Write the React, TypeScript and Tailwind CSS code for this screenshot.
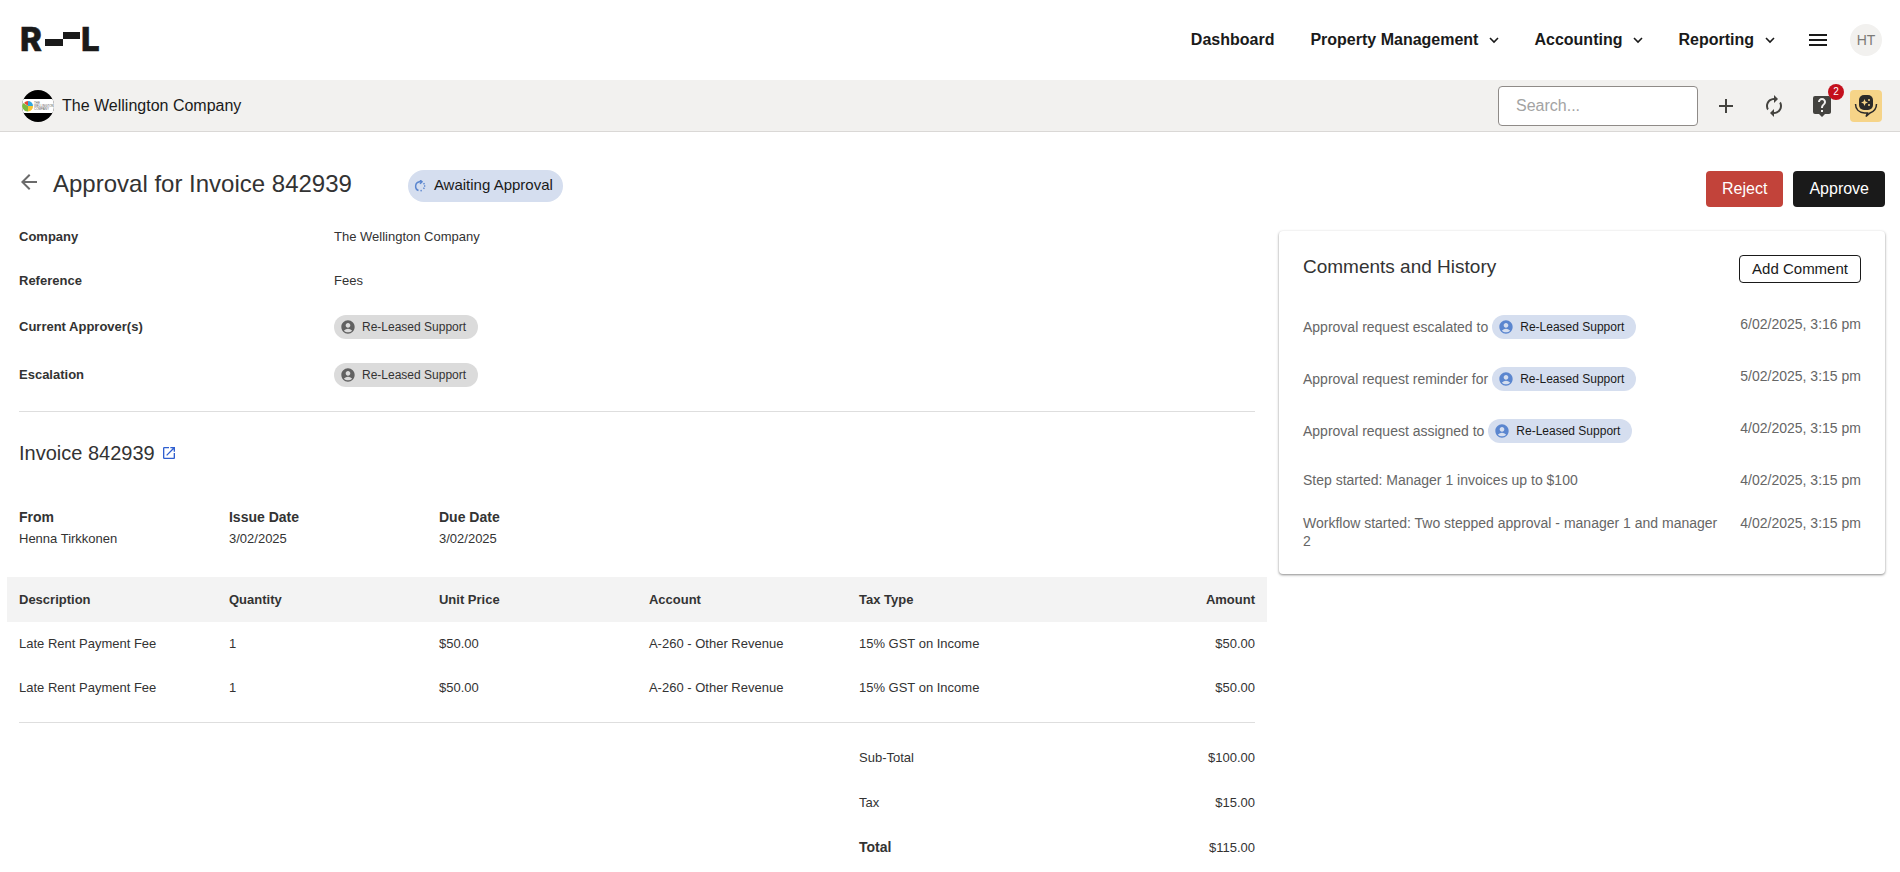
import type { ReactNode } from 'react';
import {
  MdAccountCircle,
  MdAdd,
  MdArrowBack,
  MdAutorenew,
  MdLiveHelp,
  MdMenu,
  MdOpenInNew,
} from 'react-icons/md';

const navItems = [
  { label: 'Property Management' },
  { label: 'Accounting' },
  { label: 'Reporting' },
];

const lines = [
  { description: 'Late Rent Payment Fee', quantity: 1, price: '$50.00', account: 'A-260 - Other Revenue', tax: '15% GST on Income', amount: '$50.00' },
  { description: 'Late Rent Payment Fee', quantity: 1, price: '$50.00', account: 'A-260 - Other Revenue', tax: '15% GST on Income', amount: '$50.00' },
];

const history = [
  { text: 'Approval request escalated to', user: 'Re-Leased Support', date: '6/02/2025, 3:16 pm' },
  { text: 'Approval request reminder for', user: 'Re-Leased Support', date: '5/02/2025, 3:15 pm' },
  { text: 'Approval request assigned to', user: 'Re-Leased Support', date: '4/02/2025, 3:15 pm' },
  { text: 'Step started: Manager 1 invoices up to $100', date: '4/02/2025, 3:15 pm' },
  { text: 'Workflow started: Two stepped approval - manager 1 and manager 2', date: '4/02/2025, 3:15 pm' },
];

function Logo() {
  return (
    <svg width="80" height="26" viewBox="0 0 80 26" fill="#1a1a1a" className="block overflow-visible" aria-label="Re-Leased">
      <g fontSize="33" fontWeight="800" fontFamily="Inter, sans-serif" stroke="#1a1a1a" strokeWidth="0.600">
        <text x="-2" y="24">R</text>
        <text x="59" y="24">L</text>
      </g>
      <rect x="23" y="12" width="18" height="7" />
      <rect x="41" y="5" width="17" height="7" />
    </svg>
  );
}

function CompanyAvatar() {
  return (
    <svg width="32" height="32" viewBox="0 0 32 32" aria-hidden="true">
      <clipPath id="avatar">
        <circle cx="16" cy="16" r="16" />
      </clipPath>
      <g clipPath="url(#avatar)">
        <rect width="32" height="32" fill="#000" />
        <rect y="9" width="32" height="14" fill="#fff" />
        <path d="M6 16V11A5 5 0 0 0 2 13Z" fill="#e5493a" />
        <path d="M6 16V11A5 5 0 0 1 11 16Z" fill="#2ea7df" />
        <path d="M6 16H11A5 5 0 0 1 6 21.500Z" fill="#f6c430" />
        <path d="M6 16V21.500A5.500 5.500 0 0 1 1 13Z" fill="#7cb93e" />
        <g fill="#555" fontSize="3" fontFamily="Liberation Sans, sans-serif">
          <text x="12" y="14">THE</text>
          <text x="12" y="17">WELLINGTON</text>
          <text x="12" y="20">COMPANY</text>
        </g>
      </g>
    </svg>
  );
}

function AssistantIcon() {
  return (
    <svg width="24" height="24" viewBox="0 0 24 24" fill="none" aria-hidden="true">
      <rect x="5" y="1" width="14" height="15" rx="5" fill="#2b2a29" />
      <path d="M10.500 5l1 2.500 2.500 1-2.500 1-1 2.500-1-2.500-2.500-1 2.500-1z" fill="#f6d488" />
      <circle cx="15" cy="6" r="1" fill="#f6d488" />
      <circle cx="15" cy="11" r="1" fill="#f6d488" />
      <path d="M1.500 10c0 5 3.500 8.500 9 9h3l-1.500 3.500 4-3.500c4-1.500 6.500-4.500 6.500-9" stroke="#2b2a29" strokeWidth="1.500" />
    </svg>
  );
}

function PendingIcon() {
  return (
    <svg width="12" height="12" viewBox="0 0 12 12" fill="none" stroke="#5b86cf" strokeWidth="1.500" aria-hidden="true">
      <path d="M4.500 10.500A4.600 4.600 0 0 1 5.500 1.700H7.500" />
      <path d="M6 0l2 1.700-2 2" />
      <path d="M9.500 3.300l1 1M10 6h1.300M9.500 8.700l.8-1M6.500 10.800l1.300-.3" />
    </svg>
  );
}

function Chevron() {
  return (
    <svg width="24" height="24" viewBox="0 0 24 24" fill="none" stroke="#1a1a1a" strokeWidth="1.600" aria-hidden="true">
      <path d="M8 10l4 4 4-4" />
    </svg>
  );
}

function UserChip({ name, blue = false }: { name: string; blue?: boolean }) {
  return (
    <span
      className={`inline-flex h-6 items-center gap-1.5 rounded-full pl-1.5 pr-3 text-[12px] whitespace-nowrap ${
        blue ? 'bg-[#d5deef] text-[#1a1a1a]' : 'bg-[#dbdbdb] text-[#333]'
      }`}
    >
      <MdAccountCircle size={16} color={blue ? '#5b86cf' : '#616161'} />
      {name}
    </span>
  );
}

function DetailRow({ label, children, tall = false }: { label: string; children: ReactNode; tall?: boolean }) {
  return (
    <div className={`flex items-center ${tall ? 'h-12' : 'h-11'}`}>
      <dt className="w-1/4 px-3 font-bold">{label}</dt>
      <dd className="flex px-3">{children}</dd>
    </div>
  );
}

function Header() {
  return (
    <header>
      <div className="flex h-20 items-center justify-between pl-[22px] pr-[18px]">
        <a href="#home">
          <Logo />
        </a>
        <nav className="flex items-center text-[16px] font-bold text-[#1a1a1a]">
          <a href="#dashboard" className="mr-9">Dashboard</a>
          <div className="flex gap-7">
            {navItems.map((item) => (
              <button key={item.label} className="flex items-center gap-1">
                {item.label}
                <Chevron />
              </button>
            ))}
          </div>
          <button aria-label="Menu" className="ml-6">
            <MdMenu size={24} />
          </button>
          <button className="ml-5 h-8 w-8 rounded-full bg-[#f2f1ef] text-[14px] font-normal text-[#7d7b77]">HT</button>
        </nav>
      </div>

      <div className="flex h-[52px] items-center justify-between border-b border-[#dad8d6] bg-[#f2f1ef] pl-[22px] pr-[18px]">
        <div className="flex items-center gap-2 text-[16px] text-[#1a1a1a]">
          <CompanyAvatar />
          The Wellington Company
        </div>
        <div className="flex items-center text-[#44433f]">
          <input
            type="search"
            aria-label="Search"
            placeholder="Search..."
            className="mr-1 h-10 w-[200px] rounded border border-[#8f8b88] bg-white px-[17px] text-[16px] placeholder:text-[#a3a3a3]"
          />
          <button aria-label="Add" className="flex w-12 justify-center">
            <MdAdd size={24} />
          </button>
          <button aria-label="Refresh" className="flex w-12 justify-center">
            <MdAutorenew size={24} />
          </button>
          <button aria-label="Help" className="relative flex w-12 justify-center">
            <MdLiveHelp size={24} />
            <span className="absolute -top-2.5 right-0.5 h-4 w-4 rounded-full bg-[#c4101c] text-center text-[10px] leading-4 text-white">
              2
            </span>
          </button>
          <button aria-label="Assistant" className="ml-1 flex h-8 w-8 items-center justify-center rounded bg-[#f6d488]">
            <AssistantIcon />
          </button>
        </div>
      </div>
    </header>
  );
}

function InvoiceDetails() {
  return (
    <section>
      <dl>
        <DetailRow label="Company">The Wellington Company</DetailRow>
        <DetailRow label="Reference">Fees</DetailRow>
        <DetailRow label="Current Approver(s)" tall>
          <UserChip name="Re-Leased Support" />
        </DetailRow>
        <DetailRow label="Escalation" tall>
          <UserChip name="Re-Leased Support" />
        </DetailRow>
      </dl>

      <hr className="mx-3 mt-3 border-[#dedede]" />

      <h2 className="mt-7 flex items-center gap-1.5 px-3 text-[20px] leading-[26px]">
        Invoice 842939
        <a href="#invoice" aria-label="Open invoice">
          <MdOpenInNew size={16} color="#2f5fd0" />
        </a>
      </h2>

      <dl className="mt-10 grid grid-cols-6 leading-[22px]">
        <div className="px-3">
          <dt className="text-[14px] font-bold">From</dt>
          <dd>Henna Tirkkonen</dd>
        </div>
        <div className="px-3">
          <dt className="text-[14px] font-bold">Issue Date</dt>
          <dd>3/02/2025</dd>
        </div>
        <div className="px-3">
          <dt className="text-[14px] font-bold">Due Date</dt>
          <dd>3/02/2025</dd>
        </div>
      </dl>

      <table className="mt-[27px] w-full table-fixed text-left">
        <thead className="bg-[#f3f3f3]">
          <tr className="h-[45px]">
            <th className="px-3">Description</th>
            <th className="px-3">Quantity</th>
            <th className="px-3">Unit Price</th>
            <th className="px-3">Account</th>
            <th className="px-3">Tax Type</th>
            <th className="px-3 text-right">Amount</th>
          </tr>
        </thead>
        <tbody>
          {lines.map((line, i) => (
            <tr key={i} className="h-11">
              <td className="px-3">{line.description}</td>
              <td className="px-3">{line.quantity}</td>
              <td className="px-3">{line.price}</td>
              <td className="px-3">{line.account}</td>
              <td className="px-3">{line.tax}</td>
              <td className="px-3 text-right">{line.amount}</td>
            </tr>
          ))}
        </tbody>
      </table>

      <hr className="mx-3 my-3 border-[#dedede]" />

      <table className="ml-auto w-1/3 table-fixed text-left">
        <tbody>
          <tr className="h-[45px]">
            <th className="px-3 font-normal">Sub-Total</th>
            <td className="px-3 text-right">$100.00</td>
          </tr>
          <tr className="h-[45px]">
            <th className="px-3 font-normal">Tax</th>
            <td className="px-3 text-right">$15.00</td>
          </tr>
          <tr className="h-[45px]">
            <th className="px-3 text-[14px]">Total</th>
            <td className="px-3 text-right">$115.00</td>
          </tr>
        </tbody>
      </table>
    </section>
  );
}

function CommentsPanel() {
  return (
    <section className="rounded bg-white p-6 shadow-[0_1px_3px_rgba(0,0,0,0.3),0_1px_2px_rgba(0,0,0,0.2)]">
      <div className="flex items-start justify-between">
        <h2 className="text-[19px] leading-6">Comments and History</h2>
        <button className="h-7 rounded border border-[#1a1a1a] px-3 text-[15px] text-[#1a1a1a]">Add Comment</button>
      </div>

      <ul className="mt-8 flex flex-col gap-[25px] text-[14px] leading-[18px] text-[#666]">
        {history.map((entry) => (
          <li key={entry.text} className="flex items-start justify-between gap-3">
            <div className={entry.user ? 'flex items-center gap-1 pb-[3px]' : ''}>
              {entry.text}
              {entry.user && <UserChip name={entry.user} blue />}
            </div>
            <time className="whitespace-nowrap">{entry.date}</time>
          </li>
        ))}
      </ul>
    </section>
  );
}

export default function App() {
  return (
    <div className="min-h-screen bg-white font-['Liberation_Sans',Arial,sans-serif] text-[13px] text-[#333]">
      <Header />

      <main className="pl-[7px] pr-[3px]">
        {/* Title and actions */}
        <div className="flex h-[83px] items-center justify-between pl-2.5 pr-3 pt-6">
          <div className="flex items-center">
            <a href="#back" aria-label="Back" className="pb-2 text-[#6b6b6b]">
              <MdArrowBack size={24} />
            </a>
            <h1 className="ml-3 pb-1 text-[24px] leading-8">Approval for Invoice 842939</h1>
            <span className="ml-14 flex h-8 items-center gap-2 rounded-full bg-[#d5deef] pl-1.5 pr-2.5 text-[15px] text-[#1a1a1a]">
              <PendingIcon />
              Awaiting Approval
            </span>
          </div>
          <div className="flex gap-2.5 pt-1.5 text-[16px] text-white">
            <button className="h-9 rounded bg-[#c2433a] px-4">Reject</button>
            <button className="h-9 rounded bg-[#1a1a1a] px-4">Approve</button>
          </div>
        </div>

        <div className="flex items-start">
          <div className="w-2/3">
            <InvoiceDetails />
          </div>
          <div className="w-1/3 px-3 pt-4">
            <CommentsPanel />
          </div>
        </div>
      </main>
    </div>
  );
}
